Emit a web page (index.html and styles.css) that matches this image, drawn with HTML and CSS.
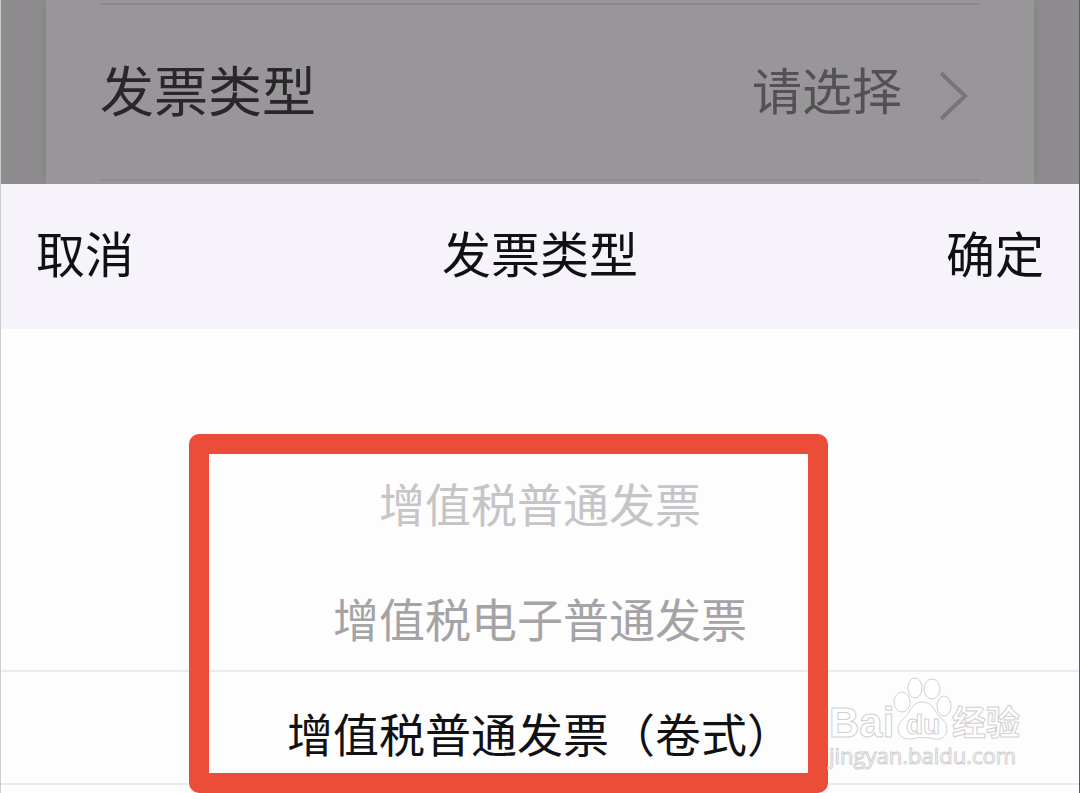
FILE: index.html
```html
<!DOCTYPE html>
<html lang="zh-CN">
<head>
    <meta charset="UTF-8">
    <meta name="viewport" content="width=device-width, initial-scale=1.0">
    <title>发票类型</title>
    <link rel="stylesheet" href="styles.css">
</head>
<body>
    <main class="form-page">
        <div class="form-card">
            <button type="button" class="form-row">
                <span class="row-label">发票类型</span>
                <span class="row-value">请选择</span>
                <svg class="row-arrow" viewBox="0 0 32 52" aria-hidden="true">
                    <path d="M3 3 L27 26 L3 49" />
                </svg>
            </button>
        </div>
    </main>

    <section class="sheet">
        <header class="toolbar">
            <button type="button" class="toolbar-button">取消</button>
            <h1 class="toolbar-title">发票类型</h1>
            <button type="button" class="toolbar-button confirm">确定</button>
        </header>

        <div class="picker">
            <label class="option far">
                <input type="radio" name="invoice" value="normal">
                <span>增值税普通发票</span>
            </label>
            <label class="option near">
                <input type="radio" name="invoice" value="electronic">
                <span>增值税电子普通发票</span>
            </label>
            <label class="option selected">
                <input type="radio" name="invoice" value="roll" checked>
                <span>增值税普通发票（卷式）</span>
            </label>
            <div class="highlight"></div>
            <svg class="watermark" viewBox="0 0 200 100" aria-hidden="true">
                <text class="brand" x="2" y="63">Bai</text>
                <ellipse cx="75" cy="28" rx="8" ry="10" />
                <ellipse cx="88" cy="14" rx="7" ry="10" />
                <ellipse cx="105" cy="15" rx="8" ry="10" />
                <ellipse cx="117" cy="32" rx="7" ry="10" />
                <path d="M95 28 C102 28 106 32 109 38 C112 44 120 46 120 55 C120 63 114 66 107 65 C100 63 92 63 85 65 C77 66 71 62 71 55 C71 48 78 45 82 38 C85 32 89 28 95 28 Z" />
                <text class="du" x="79" y="60">du</text>
                <text class="cn" x="125" y="61">经验</text>
                <text class="url" x="2" y="90">jingyan.baidu.com</text>
            </svg>
        </div>
    </section>
</body>
</html>
```
FILE: styles.css
```css
* {
    box-sizing: border-box;
}

body {
    margin: 0;
    height: 100vh;
    overflow: hidden;
    display: flex;
    flex-direction: column;
    background-color: #fdfdfd;
    border-left: 1px solid #cccccc;
    border-right: 1px solid #5c5c60;
    font-family: "Liberation Sans", "Noto Sans CJK SC", sans-serif;
    color: #111114;
}

button {
    border: none;
    padding: 0;
    background: none;
    font-family: inherit;
    color: inherit;
    cursor: pointer;
}

/* dimmed form behind the sheet */
.form-page {
    padding: 0 45px;
    background-color: #8e8c8e;
}

.form-card {
    padding: 3px 54px;
    background-color: #989698;
    box-shadow: 0 0 8px #828082;
}

.form-row {
    display: flex;
    align-items: center;
    width: 100%;
    height: 178px;
    padding-bottom: 8px;
    border-top: 2px solid #8b898b;
    border-bottom: 2px solid #8f8d8f;
}

.row-label {
    flex: 1;
    text-align: left;
    font-size: 54px;
    color: #29272a;
}

.row-value {
    font-size: 50px;
    color: #535154;
}

.row-arrow {
    width: 32px;
    height: 52px;
    margin: 16px 10px 0 36px;
    fill: none;
    stroke: #777577;
    stroke-width: 4;
}

/* bottom sheet */
.sheet {
    flex: 1;
}

.toolbar {
    display: grid;
    grid-template-columns: 1fr auto 1fr;
    align-items: center;
    height: 145px;
    padding: 0 35px 10px;
    background-color: #f6f4fa;
}

.toolbar-button {
    justify-self: start;
    font-size: 49px;
}

.confirm {
    justify-self: end;
}

.toolbar-title {
    margin: 0;
    font-size: 49px;
    font-weight: normal;
}

.picker {
    position: relative;
    padding-top: 111px;
}

.option {
    display: flex;
    align-items: center;
    justify-content: center;
    height: 115px;
    padding-top: 8px;
    font-size: 46px;
    cursor: pointer;
}

.option input {
    position: absolute;
    opacity: 0;
}

.far {
    color: #c6c4c7;
}

.near {
    color: #a5a3a6;
}

.selected {
    border-top: 2px solid #ebebed;
    border-bottom: 2px solid #ebebed;
}

.highlight {
    position: absolute;
    top: 105px;
    left: 188px;
    right: 251px;
    height: 359px;
    border: 20px solid #ec4d38;
    border-radius: 10px;
    pointer-events: none;
}

.watermark {
    position: absolute;
    right: 52px;
    top: 345px;
    width: 200px;
    height: 100px;
    fill: #ffffff;
    stroke: #d0d0d0;
    stroke-width: 1;
    pointer-events: none;
}

.brand {
    font-size: 42px;
    font-weight: bold;
}

.du {
    font-size: 28px;
    font-weight: bold;
}

.cn {
    font-size: 34px;
    font-weight: bold;
}

.url {
    font-family: "Open Sans", sans-serif;
    font-size: 22px;
}
```
